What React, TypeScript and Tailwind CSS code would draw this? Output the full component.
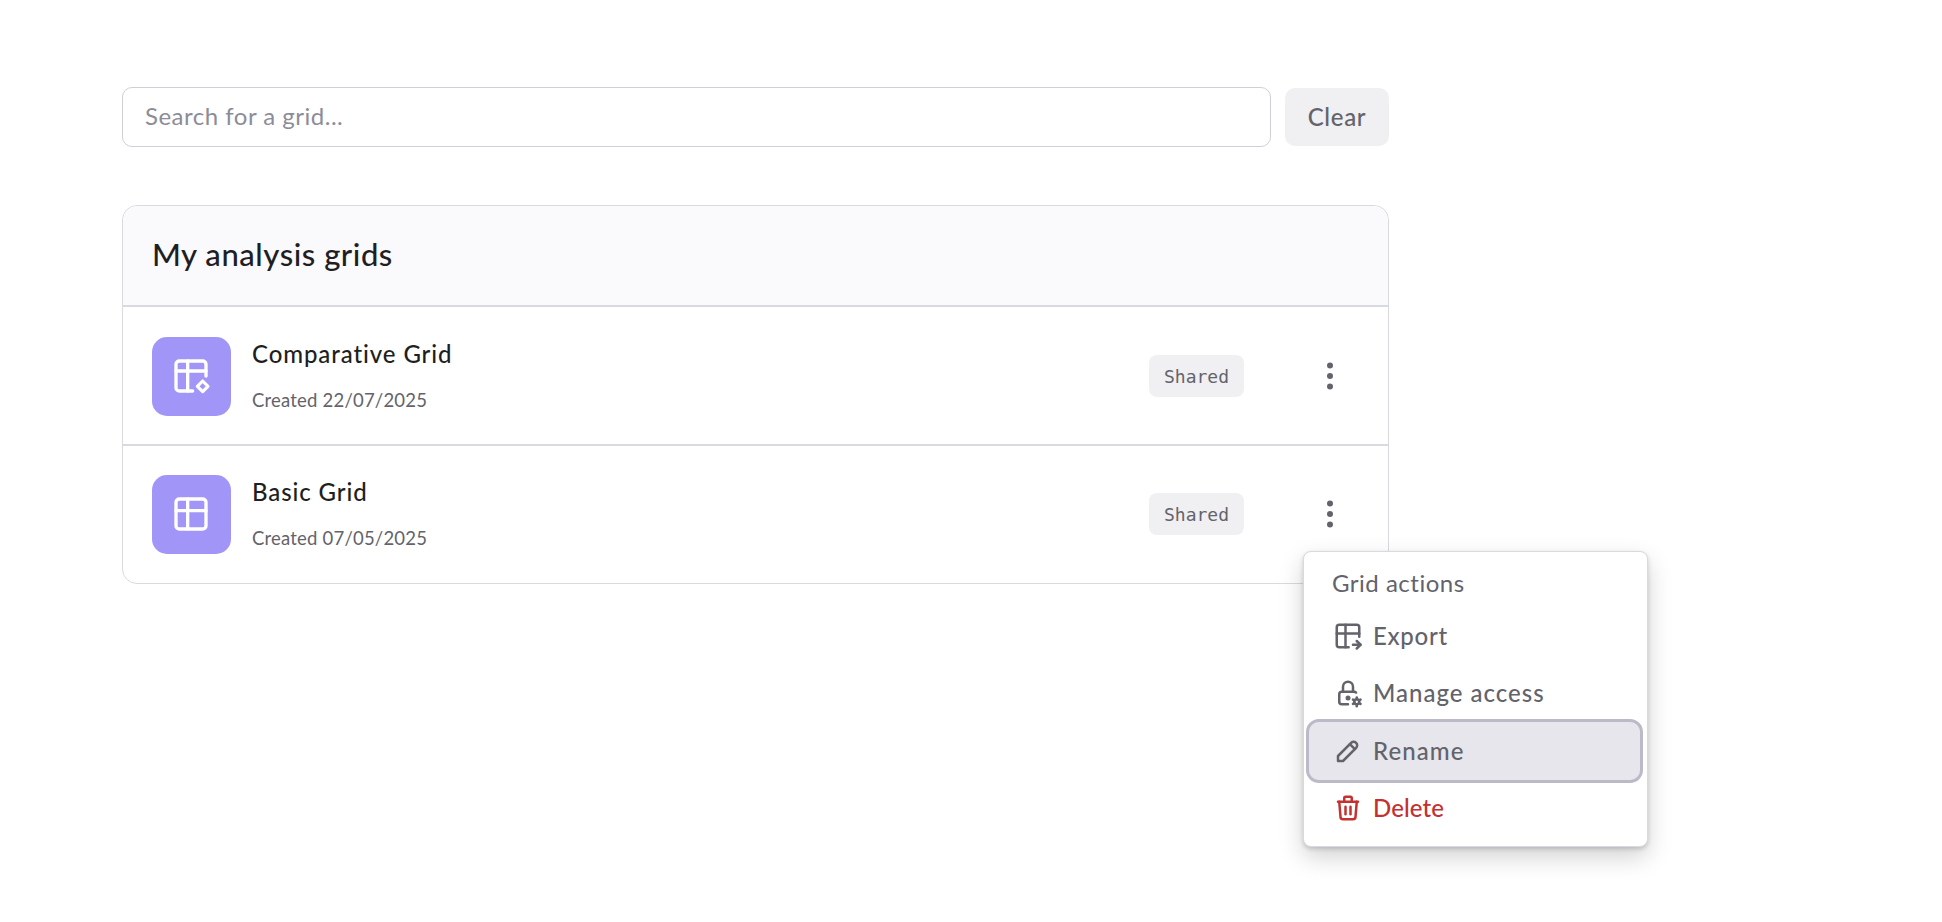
import { TbLockCog, TbPencil, TbTable, TbTableExport, TbTrash } from "react-icons/tb"

const GRIDS = [
  { name: "Comparative Grid", created: "Created 22/07/2025", spark: true },
  { name: "Basic Grid", created: "Created 07/05/2025", spark: false },
]

function SparkTable() {
  return (
    <svg width="40" height="40" viewBox="0 0 24 24" fill="none" stroke="currentColor" strokeWidth="2" strokeLinecap="round" strokeLinejoin="round">
      <path d="M13 21h-8a2 2 0 0 1 -2 -2v-14a2 2 0 0 1 2 -2h14a2 2 0 0 1 2 2v7" />
      <path d="M3 9h18" />
      <path d="M10 3v18" />
      <path d="M19 15l3.2 3.2l-3.2 3.2l-3.2 -3.2z" strokeWidth="1.9" />
    </svg>
  )
}

function Dots() {
  return (
    <svg width="36" height="36" viewBox="0 0 36 36" fill="currentColor">
      <circle cx="18" cy="7.5" r="3" />
      <circle cx="18" cy="18" r="3" />
      <circle cx="18" cy="28.5" r="3" />
    </svg>
  )
}

export default function App() {
  return (
    <div className="min-h-screen bg-white pl-[122px] pt-[87px] font-['Lato',sans-serif] text-[#1f1f23]">
      <div className="relative w-[1267px]">
        <div className="flex items-center gap-[14px]">
          <input
            placeholder="Search for a grid..."
            className="h-[60px] flex-1 rounded-[10px] border border-[#d0cfd8] bg-white px-[22px] pb-[3px] text-[24px] tracking-[0.5px] outline-none placeholder:text-[#8c8c99]"
          />
          <button className="h-[58px] w-[104px] rounded-[10px] bg-[#f0eff2] text-[24px] font-medium tracking-[0.7px] text-[#63636b]">Clear</button>
        </div>

        <div className="mt-[58px] rounded-[15px] border border-[#d9d9e0]">
          <div className="flex h-[101px] items-center rounded-t-[15px] border-b-2 border-[#d9d9e0] bg-[#fafafc] px-[29px] pb-[2px]">
            <h2 className="text-[31px] font-medium tracking-[0.55px]">My analysis grids</h2>
          </div>
          {GRIDS.map((grid, idx) => (
            <div key={idx} className={`flex items-center pl-[29px] pr-[30px] ${idx === 0 ? "h-[138.5px] border-b-2 border-[#d9d9e0] pt-[2px]" : "h-[137.5px]"}`}>
              <div className="flex h-[79px] w-[79px] items-center justify-center rounded-[15px] bg-[#a196f8] pr-[2px] text-white">
                {grid.spark ? <SparkTable /> : <TbTable size={40} strokeWidth={2} />}
              </div>
              <div className="ml-[21px] flex flex-1 flex-col">
                <span className="text-[24px] leading-[30px] font-medium tracking-[0.9px]">{grid.name}</span>
                <span className="mt-[19px] text-[18.5px] leading-[25px] tracking-[0.2px] text-[#63636b]">{grid.created}</span>
              </div>
              <span className="flex h-[42px] w-[95px] items-center justify-center rounded-[8px] bg-[#f0eff2] pt-[1px] font-['DejaVu_Sans_Mono',monospace] text-[18px] text-[#63636b]">
                Shared
              </span>
              <button className="ml-[58px] flex h-[56px] w-[56px] items-center justify-center text-[#63636b]">
                <Dots />
              </button>
            </div>
          ))}
        </div>

        <div className="absolute left-[1181px] top-[464px] w-[345px] rounded-[8px] border border-[#d9d9e0] bg-white pb-[9px] pl-[5px] pr-[7px] pt-[7px] text-[#63636b] shadow-[0_10px_24px_rgba(0,0,0,0.18),0_2px_4px_rgba(0,0,0,0.16)]">
          <div className="flex h-[48px] items-center px-[23px] text-[24px] tracking-[0.5px]">Grid actions</div>
          <div className="flex h-[57.5px] items-center gap-[10px] px-[24px] text-[24px] font-medium tracking-[0.7px]">
            <TbTableExport size={30} strokeWidth={2} />
            Export
          </div>
          <div className="flex h-[57.5px] items-center gap-[10px] px-[24px] text-[24px] font-medium tracking-[1px]">
            <TbLockCog size={30} strokeWidth={2} />
            Manage access
          </div>
          <div className="flex h-[57.5px] items-center gap-[10px] rounded-[10px] bg-[#e7e6ec] px-[24px] text-[24px] font-medium tracking-[1.1px] outline-[3px] outline-[#bcb9c9]">
            <TbPencil size={30} strokeWidth={2} />
            Rename
          </div>
          <div className="flex h-[57.5px] items-center gap-[10px] px-[24px] text-[24px] font-medium tracking-[0.1px] text-[#c53030]">
            <TbTrash size={30} strokeWidth={2} />
            Delete
          </div>
        </div>
      </div>
    </div>
  )
}
